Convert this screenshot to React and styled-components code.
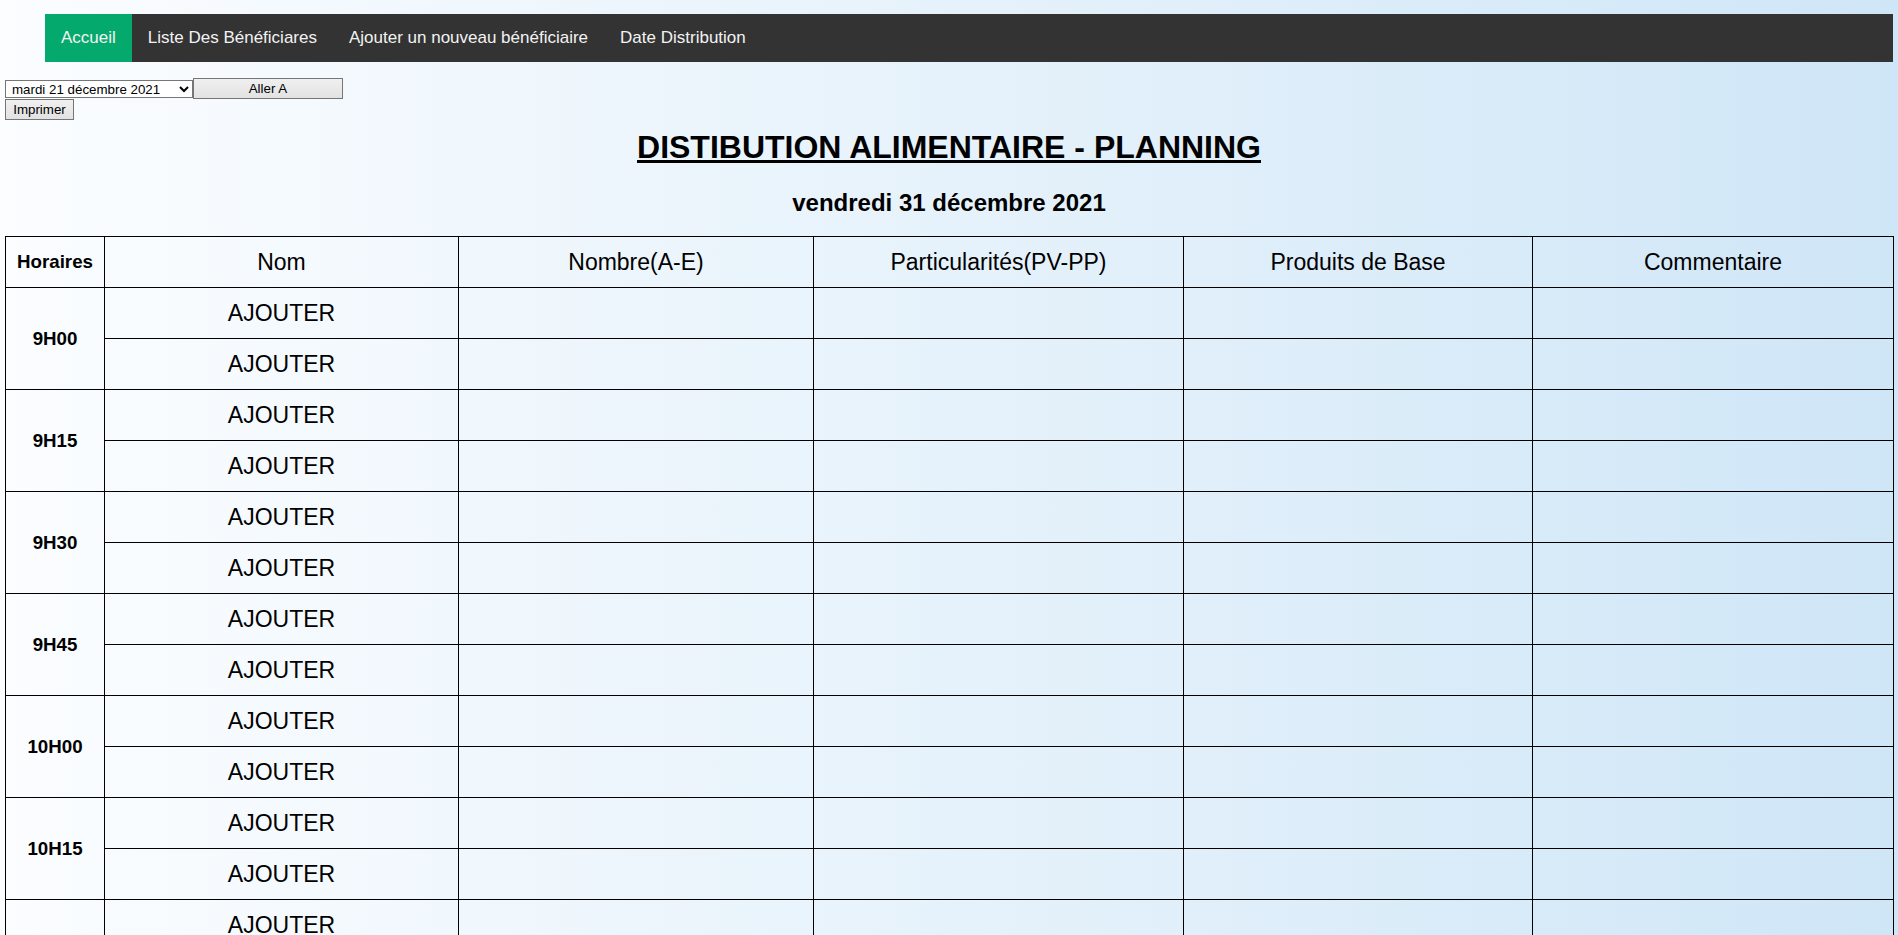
import React from "react";
import styled, { createGlobalStyle } from "styled-components";

const GlobalStyle = createGlobalStyle`
  html, body {
    margin: 0;
    padding: 0;
  }
  body {
    padding: 14px 5px 0;
    min-height: 100vh;
    font-family: "Liberation Sans", Arial, sans-serif;
    color: #000;
    background: linear-gradient(to right, #fbfdff 0%, #e6f2fb 50%, #cfe6f7 100%);
  }
`;

const menu = [
  "Accueil",
  "Liste Des Bénéficiares",
  "Ajouter un nouveau bénéficiaire",
  "Date Distribution",
];

const times = [
  "9H00", "9H15", "9H30", "9H45",
  "10H00", "10H15", "10H30", "10H45",
  "11H00", "11H15", "11H30", "11H45",
];

const columns = [
  { label: "Horaires", width: 99, bold: true },
  { label: "Nom", width: 354 },
  { label: "Nombre(A-E)", width: 355 },
  { label: "Particularités(PV-PP)", width: 370 },
  { label: "Produits de Base", width: 349 },
  { label: "Commentaire", width: 361 },
];

export default function App() {
  return (
    <>
      <GlobalStyle />
      <TopNav>
        {menu.map((item, i) => (
          <NavLink key={item} href="#" $active={i === 0}>
            {item}
          </NavLink>
        ))}
      </TopNav>

      <Controls>
        <DateSelect defaultValue="2021-12-21">
          <option value="2021-12-21">mardi 21 décembre 2021</option>
          <option value="2021-12-31">vendredi 31 décembre 2021</option>
        </DateSelect>
        <GoButton type="button">Aller A</GoButton>
        <br />
        <PrintButton type="button">Imprimer</PrintButton>
      </Controls>

      <Title>DISTIBUTION ALIMENTAIRE - PLANNING</Title>
      <DateHeading>vendredi 31 décembre 2021</DateHeading>

      <Planning>
        <colgroup>
          {columns.map((c) => (
            <col key={c.label} style={{ width: c.width }} />
          ))}
        </colgroup>
        <thead>
          <tr>
            {columns.map((c) => (
              <HeadCell key={c.label} $bold={c.bold}>
                {c.label}
              </HeadCell>
            ))}
          </tr>
        </thead>
        <tbody>
          {times.map((t) => (
            <React.Fragment key={t}>
              <tr>
                <TimeCell rowSpan={2}>{t}</TimeCell>
                <NameCell>AJOUTER</NameCell>
                <Cell />
                <Cell />
                <Cell />
                <Cell />
              </tr>
              <tr>
                <NameCell>AJOUTER</NameCell>
                <Cell />
                <Cell />
                <Cell />
                <Cell />
              </tr>
            </React.Fragment>
          ))}
        </tbody>
      </Planning>
    </>
  );
}

const TopNav = styled.nav`
  display: flex;
  margin-left: 40px;
  background-color: #333;
`;

const NavLink = styled.a`
  display: block;
  padding: 14px 16px;
  font-size: 17px;
  line-height: 20px;
  color: #f2f2f2;
  text-decoration: none;
  background-color: ${(p) => (p.$active ? "#04aa6d" : "transparent")};
`;

const Controls = styled.div`
  margin-top: 16px;
  font-size: 13.33px;
  line-height: 0;
`;

const DateSelect = styled.select`
  width: 188px;
  height: 18px;
  margin: 0;
  padding: 0 0 0 2px;
  border: 1px solid #767676;
  border-radius: 0;
  background: #fff;
  font-family: "Liberation Sans", Arial, sans-serif;
  font-size: 13.33px;
  vertical-align: middle;
`;

const baseButton = `
  margin: 0;
  padding: 1px 6px;
  border: 1px solid #767676;
  border-radius: 0;
  background: linear-gradient(#f0f0f0, #e2e2e2);
  color: #000;
  font-family: "Liberation Sans", Arial, sans-serif;
  font-size: 13.33px;
  line-height: 17px;
  box-sizing: border-box;
  height: 21px;
  vertical-align: middle;
`;

const GoButton = styled.button`
  ${baseButton}
  width: 150px;
`;

const PrintButton = styled.button`
  ${baseButton}
  width: 69px;
`;

const Title = styled.h1`
  margin: 9px 0 0;
  font-size: 32px;
  line-height: 37px;
  font-weight: bold;
  text-align: center;
  text-decoration: underline;
`;

const DateHeading = styled.h2`
  margin: 23px 0 0;
  font-size: 24px;
  line-height: 28px;
  font-weight: bold;
  text-align: center;
`;

const Planning = styled.table`
  width: 1888px;
  margin-top: 19px;
  border-collapse: collapse;
  table-layout: fixed;
  border: 1px solid #000;
`;

const HeadCell = styled.th`
  height: 50px;
  padding: 0;
  border: 1px solid #000;
  font-size: ${(p) => (p.$bold ? "18.72px" : "23px")};
  font-weight: ${(p) => (p.$bold ? "bold" : "normal")};
  text-align: center;
  vertical-align: middle;
`;

const Cell = styled.td`
  height: 50px;
  padding: 0;
  border: 1px solid #000;
  font-size: 23px;
  text-align: center;
  vertical-align: middle;
`;

const NameCell = styled(Cell)`
  cursor: pointer;
`;

const TimeCell = styled(Cell)`
  font-size: 18.72px;
  font-weight: bold;
`;
